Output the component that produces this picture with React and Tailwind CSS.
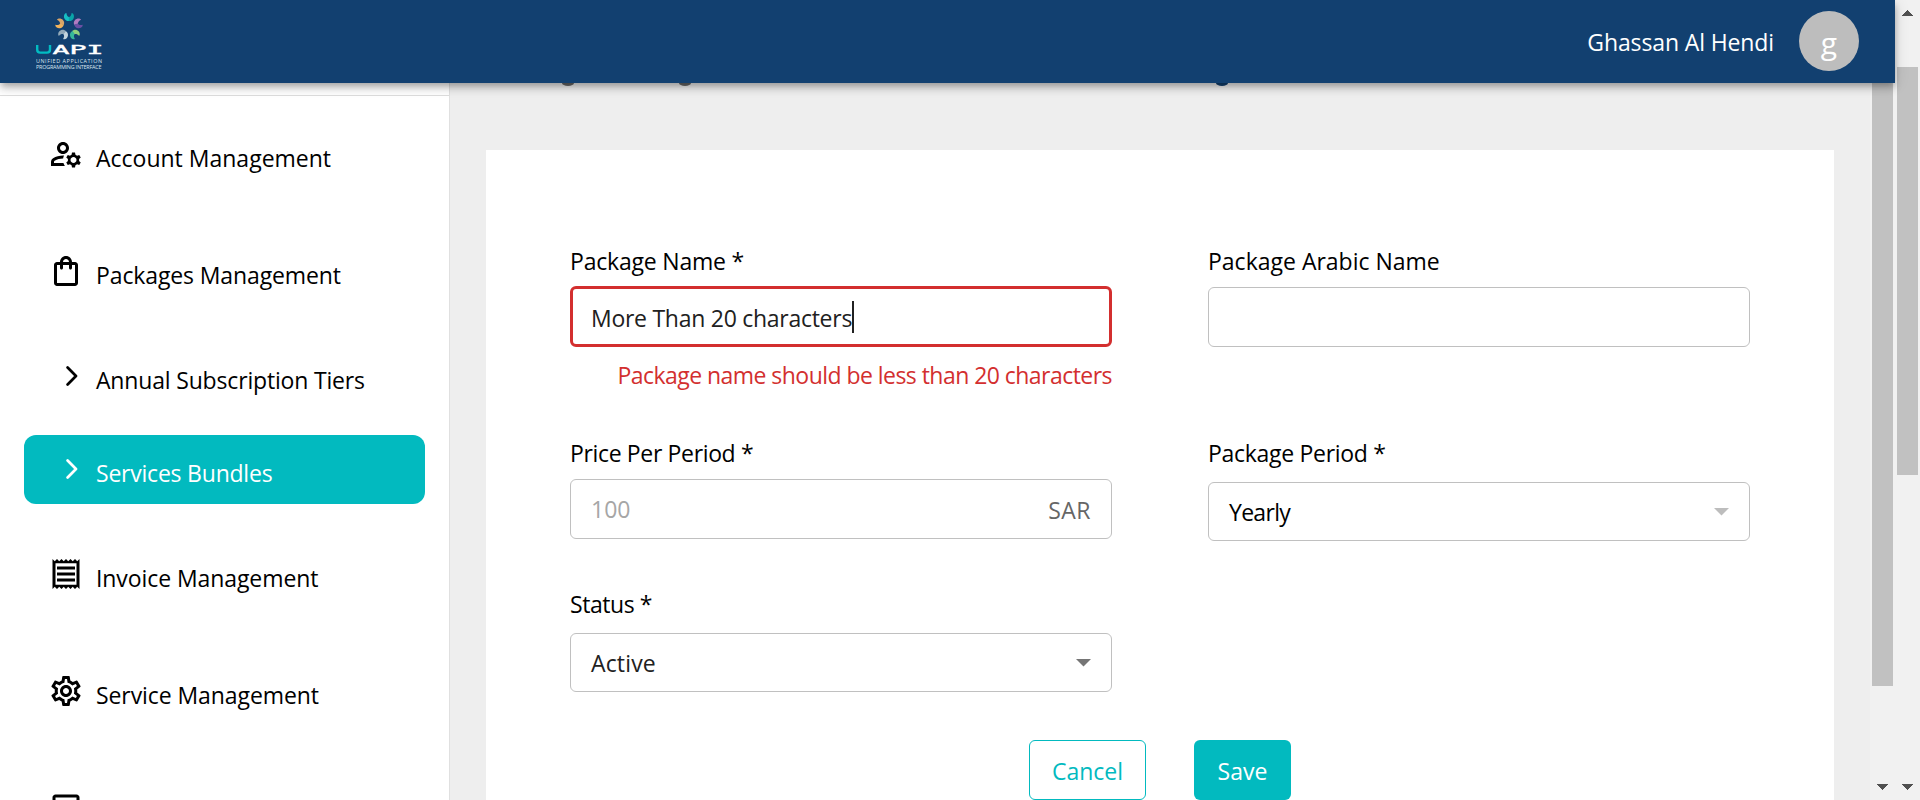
import React from "react";
import {
  MdOutlineManageAccounts,
  MdOutlineShoppingBag,
  MdOutlineReceipt,
  MdOutlineSettings,
  MdCheckBoxOutlineBlank,
} from "react-icons/md";

const petals = [
  ["#16bfc4", "#0aa5a8"],
  ["#b07cc0", "#6a4fa3"],
  ["#8fd07c", "#35b89a"],
  ["#c3d3dc", "#93a9b8"],
  ["#f0b25c", "#d9a66a"],
];

function Logo() {
  return (
    <svg width="68" height="60" viewBox="0 0 68 60" className="mt-3 block">
      <g transform="translate(33 14.5)">
        {petals.map(([a, b], i) => (
          <g key={a} transform={`rotate(${i * 72})`}>
            <path d="M-2.6 -13.6 C-5 -13 -5.6 -10 -4.4 -7.8 C-3.4 -5.9 -1.4 -5.2 0.2 -5.6 V-9.4 C-1.4 -9.8 -2.4 -11.2 -2.6 -13.6 Z" fill={a} />
            <path d="M2.6 -13.6 C5 -13 5.6 -10 4.4 -7.8 C3.4 -5.9 1.4 -5.2 -0.2 -5.6 V-9.4 C1.4 -9.8 2.4 -11.2 2.6 -13.6 Z" fill={b} />
          </g>
        ))}
      </g>
      <path d="M1.2 33 V37.5 Q1.2 40.6 4.2 40.6 H11 Q14 40.6 14 37.5 V33" fill="none" stroke="#02bcc2" strokeWidth="2.4" />
      <text
        x="16.5"
        y="41.8"
        fill="#fff"
        stroke="#fff"
        strokeWidth="0.35"
        fontFamily="DejaVu Sans Mono, monospace"
        fontSize="12"
        textLength="51"
        lengthAdjust="spacingAndGlyphs"
      >
        API
      </text>
      <text x="0" y="51.4" fill="#dbe5ee" fontFamily="Open Sans, sans-serif" fontSize="5.4" textLength="66" lengthAdjust="spacing">
        UNIFIED APPLICATION
      </text>
      <text x="0" y="56.8" fill="#dbe5ee" fontFamily="Open Sans, sans-serif" fontSize="5.4" textLength="65.5" lengthAdjust="spacing">
        PROGRAMMING INTERFACE
      </text>
    </svg>
  );
}

function Chevron() {
  return (
    <svg width="12" height="20" viewBox="0 0 12 20" className="mt-[9px] ml-[18px] shrink-0">
      <path d="M1.6 1.5 L10 10 L1.6 18.5" fill="none" stroke="currentColor" strokeWidth="2.7" strokeLinecap="round" strokeLinejoin="round" />
    </svg>
  );
}

function NavItem({ icon: Icon, label, className = "h-[117px]", textClass = "" }) {
  return (
    <div className={`flex items-start pl-12 ${className}`}>
      <Icon size={36} className="shrink-0" />
      {label && <span className={`mt-1.5 ml-3 leading-8 ${textClass}`}>{label}</span>}
    </div>
  );
}

function Caret({ className }) {
  return (
    <svg width="15" height="8" viewBox="0 0 15 8" className={className}>
      <path d="M0 0 H15 L7.5 7.5 Z" fill="currentColor" />
    </svg>
  );
}

function Arrow({ up }) {
  return (
    <svg width="11" height="6" viewBox="0 0 11 6" className="shrink-0 text-[#505050]" shapeRendering="crispEdges">
      <path d={up ? "M0 6 L5.5 0 L11 6 Z" : "M0 0 H11 L5.5 6 Z"} fill="currentColor" />
    </svg>
  );
}

const box = "flex items-center rounded-md border border-[#c0c0c0] px-5";
const descender = "h-[3px] w-[12px] rounded-[0_0_50%_50%/0_0_100%_100%]";

export default function App() {
  return (
    <div className="flex h-[800px] w-[1920px] overflow-hidden bg-[#eeeeee] font-['Open_Sans','Noto_Sans',sans-serif] text-[23px] text-black">
      <div className="flex w-[1895px] shrink-0 flex-col">
        <header className="relative z-10 flex h-[83px] shrink-0 items-start justify-between bg-[#124070] px-9 text-white shadow-[0_3px_6px_-1.5px_rgba(0,0,0,0.2),0_6px_7.5px_rgba(0,0,0,0.14),0_1.5px_15px_rgba(0,0,0,0.12)]">
          <Logo />
          <div className="flex items-start">
            <span className="mt-[26px] mr-[25px] leading-8 tracking-[-0.12px]">Ghassan Al Hendi</span>
            <div className="mt-[11px] flex size-[60px] items-center justify-center rounded-full bg-[#bdbdbd] pt-[3px] text-[30px] leading-none">
              g
            </div>
          </div>
        </header>

        <div className="flex min-h-0 flex-1">
          <nav className="w-[450px] shrink-0 overflow-hidden border-r border-[#e0e0e0] bg-white">
            <div className="h-[13px] border-b border-[#dddddd]" />
            <div className="pt-10">
              <NavItem icon={MdOutlineManageAccounts} label="Account Management" />
              <NavItem icon={MdOutlineShoppingBag} label="Packages Management" className="h-[104px]" textClass="tracking-[-0.12px]" />
              <div className="flex h-[78px] items-start pl-12">
                <Chevron />
                <span className="mt-[7px] ml-[18px] leading-8 tracking-[-0.17px]">Annual Subscription Tiers</span>
              </div>
              <div className="ml-6 flex h-[69px] w-[401px] items-start rounded-xl bg-[#02babf] pt-[15px] pl-6 text-white">
                <Chevron />
                <span className="mt-[7px] ml-[18px] leading-8 tracking-[-0.22px]">Services Bundles</span>
              </div>
              <div className="h-[52px]" />
              <NavItem icon={MdOutlineReceipt} label="Invoice Management" textClass="tracking-[-0.08px]" />
              <NavItem icon={MdOutlineSettings} label="Service Management" textClass="tracking-[-0.08px]" />
              <NavItem icon={MdCheckBoxOutlineBlank} className="h-9" />
            </div>
          </nav>

          <main className="min-w-0 flex-1 overflow-hidden px-9">
            <div className="flex h-[67px] items-start pl-[76px]">
              <div className={`bg-[#666666] ${descender}`} />
              <div className={`ml-[105px] bg-[#666666] ${descender}`} />
              <div className={`ml-[525px] bg-[#124070] ${descender}`} />
            </div>
            <section className="h-[720px] w-[1348px] bg-white px-[84px] pt-[95px]">
              <div className="grid grid-cols-[542px_542px] grid-rows-[192px_151px_104px] gap-x-24">
                <div>
                  <div className="leading-8 tracking-[-0.2px]">Package Name *</div>
                  <div className="mt-[9px] flex h-[61px] items-center rounded-md border-[3px] border-[#d32f2f] pl-[18px] text-[#212121]">
                    <span className="pt-[3px] leading-8 tracking-[-0.27px]">More Than 20 characters</span>
                    <span className="h-8 w-0.5 bg-[#212121]" />
                  </div>
                  <div className="mt-3 text-right leading-8 tracking-[-0.54px] whitespace-nowrap text-[#d32f2f]">
                    Package name should be less than 20 characters
                  </div>
                </div>
                <div>
                  <div className="leading-8">Package Arabic Name</div>
                  <div className={`mt-2.5 h-[60px] ${box}`} />
                </div>
                <div>
                  <div className="leading-8 tracking-[-0.35px]">Price Per Period *</div>
                  <div className={`mt-2.5 h-[60px] justify-between ${box}`}>
                    <span className="leading-8 text-[#a6a6a6]">100</span>
                    <span className="pt-0.5 leading-8 tracking-[0.5px] text-[#666666]">SAR</span>
                  </div>
                </div>
                <div>
                  <div className="leading-8 tracking-[-0.3px]">Package Period *</div>
                  <div className={`mt-[13px] h-[59px] justify-between ${box}`}>
                    <span className="leading-8 tracking-[-0.7px]">Yearly</span>
                    <Caret className="text-[#bdbdbd]" />
                  </div>
                </div>
                <div>
                  <div className="leading-8 tracking-[-0.45px]">Status *</div>
                  <div className={`mt-[13px] h-[59px] justify-between ${box}`}>
                    <span className="leading-8 tracking-[0.15px] text-[#212121]">Active</span>
                    <Caret className="text-[#757575]" />
                  </div>
                </div>
              </div>
              <div className="mt-12 flex justify-center gap-12">
                <button className="h-[60px] w-[117px] rounded-md border border-[#02babf] pt-0.5 text-[#02babf]">Cancel</button>
                <button className="h-[60px] w-[97px] rounded-md bg-[#02babf] pt-0.5 text-white">Save</button>
              </div>
            </section>
          </main>

          <div className="flex w-[25px] shrink-0 flex-col items-center bg-[#f1f1f1]">
            <div className="h-[603px] w-[21px] bg-[#c1c1c1]" />
            <div className="mt-[98px]">
              <Arrow />
            </div>
          </div>
        </div>
      </div>

      <div className="flex w-[25px] shrink-0 flex-col items-center bg-[#f1f1f1] pt-2.5">
        <Arrow up />
        <div className="mt-[51px] h-[408px] w-[21px] bg-[#c1c1c1]" />
        <div className="mt-[309px]">
          <Arrow />
        </div>
      </div>
    </div>
  );
}
